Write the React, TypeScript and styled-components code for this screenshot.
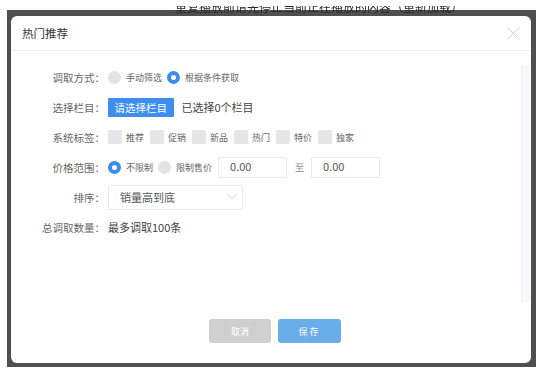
import React, { useState } from "react";
import styled, { createGlobalStyle } from "styled-components";

const GlobalStyle = createGlobalStyle`
  html, body {
    margin: 0;
    padding: 0;
    background: #ffffff;
  }
  body {
    font-family: "Noto Sans CJK SC", "Noto Sans", "Liberation Sans", sans-serif;
    overflow: hidden;
  }
  * {
    box-sizing: border-box;
  }
`;

const Backdrop = styled.div`
  position: relative;
  margin: 10px 0 0 7px;
  width: 529px;
  height: 357px;
  padding: 6px 5px 4px 4px;
  background: #4f4f4f;
`;

// page text behind the mask, only its lower half is in the window
const PageHint = styled.div`
  position: absolute;
  top: -4px;
  left: 168px;
  height: 7px;
  overflow: hidden;
`;

const HintText = styled.span`
  display: block;
  margin-top: -6px;
  font-size: 12px;
  line-height: 14px;
  color: #2a2a2a;
  white-space: nowrap;
  filter: blur(0.4px);
`;

const Modal = styled.div`
  display: flex;
  flex-direction: column;
  height: 100%;
  background: #ffffff;
  border-radius: 6px;
  overflow: hidden;
`;

const Header = styled.div`
  display: flex;
  align-items: center;
  justify-content: space-between;
  height: 35px;
  padding: 0 11px 0 11px;
  border-bottom: 1px solid #eeeeee;
`;

const Title = styled.h1`
  margin: 0;
  font-size: 11.5px;
  font-weight: 400;
  color: #333333;
`;

const CloseButton = styled.button`
  display: flex;
  padding: 0;
  border: none;
  background: none;
  cursor: pointer;
`;

const Body = styled.div`
  display: flex;
  padding-top: 11px;
  height: 251px;
`;

const Content = styled.div`
  flex: 1;
  display: flex;
  flex-direction: column;
`;

const ScrollTrack = styled.div`
  width: 10px;
  margin-top: 3px;
  background: #f8f8fa;
  border-left: 1px solid #efeff3;
`;

const Row = styled.div`
  display: flex;
  align-items: center;
  height: 30px;
`;

const Label = styled.div`
  width: 94px;
  margin-right: 3px;
  text-align: right;
  font-size: 10.5px;
  color: #666666;
  white-space: nowrap;
`;

const Options = styled.div<{ $gap: number }>`
  display: flex;
  align-items: center;
  gap: ${(p) => p.$gap}px;
`;

const Option = styled.label`
  display: flex;
  align-items: center;
  gap: 5px;
  font-size: 9px;
  color: #666666;
  cursor: pointer;
  white-space: nowrap;
`;

const RadioDot = styled.span<{ $checked: boolean }>`
  width: 13px;
  height: 13px;
  border-radius: 50%;
  background: ${(p) => (p.$checked ? "#ffffff" : "#e3e3e3")};
  border: ${(p) => (p.$checked ? "4px solid #3a8ee8" : "none")};
`;

const CheckBox = styled.span`
  width: 14px;
  height: 14px;
  border-radius: 2px;
  background: #e6e6e6;
  margin-right: -1px;
`;

const PrimaryButton = styled.button`
  height: 19px;
  padding: 0 6.5px;
  border: none;
  border-radius: 1px;
  background: #3e8ef0;
  color: #ffffff;
  font-family: inherit;
  font-size: 10.5px;
  line-height: 19px;
  cursor: pointer;
`;

const Note = styled.span`
  margin-left: 8px;
  font-size: 11px;
  color: #444444;
`;

const PriceInput = styled.input<{ $lead?: number }>`
  width: 69px;
  height: 21px;
  margin-left: ${(p) => p.$lead ?? 0}px;
  padding: 0 0 2px 11px;
  border: 1px solid #ebebeb;
  border-radius: 1px;
  font-family: inherit;
  font-size: 11px;
  color: #555555;
  outline: none;
`;

const To = styled.span`
  margin: 0 7px 0 8px;
  font-size: 9px;
  color: #888888;
`;

const Select = styled.div`
  display: flex;
  align-items: center;
  justify-content: space-between;
  width: 135px;
  height: 25px;
  padding: 0 3px 0 11px;
  border: 1px solid #ebebeb;
  border-radius: 2px;
  font-size: 11px;
  color: #555555;
`;

const Value = styled.span`
  font-size: 11px;
  color: #444444;
`;

const Footer = styled.div`
  flex: 1;
  display: flex;
  justify-content: center;
  align-items: flex-start;
  gap: 7px;
  padding: 17px 0 0 8px;
`;

const FooterButton = styled.button<{ $variant: "cancel" | "save" }>`
  width: ${(p) => (p.$variant === "cancel" ? 62 : 63)}px;
  height: 24px;
  border: none;
  border-radius: 3px;
  background: ${(p) => (p.$variant === "cancel" ? "#cfcfcf" : "#6aaee9")};
  color: #ffffff;
  font-family: inherit;
  font-size: 9px;
  letter-spacing: ${(p) => (p.$variant === "save" ? "2px" : "0")};
  cursor: pointer;
`;

const tags = ["推荐", "促销", "新品", "热门", "特价", "独家"];

const App = () => {
  const [mode, setMode] = useState<"manual" | "auto">("auto");
  const [price, setPrice] = useState<"all" | "limit">("all");
  const [minPrice, setMinPrice] = useState("0.00");
  const [maxPrice, setMaxPrice] = useState("0.00");

  return (
    <>
      <GlobalStyle />
      <Backdrop>
        <PageHint>
          <HintText>重复播放前请先停止当前正在播放的内容（重新加载）</HintText>
        </PageHint>
        <Modal>
          <Header>
            <Title>热门推荐</Title>
            <CloseButton>
              <svg width="13" height="13" viewBox="0 0 13 13">
                <path d="M0.5 0.5 L12.5 12.5 M12.5 0.5 L0.5 12.5" stroke="#d0d0d0" strokeWidth="1" fill="none" />
              </svg>
            </CloseButton>
          </Header>
          <Body>
            <Content>
              <Row>
                <Label>调取方式：</Label>
                <Options $gap={5}>
                  <Option onClick={() => setMode("manual")}>
                    <RadioDot $checked={mode === "manual"} />
                    手动筛选
                  </Option>
                  <Option onClick={() => setMode("auto")}>
                    <RadioDot $checked={mode === "auto"} />
                    根据条件获取
                  </Option>
                </Options>
              </Row>
              <Row>
                <Label>选择栏目：</Label>
                <PrimaryButton>请选择栏目</PrimaryButton>
                <Note>已选择0个栏目</Note>
              </Row>
              <Row>
                <Label>系统标签：</Label>
                <Options $gap={6}>
                  {tags.map((t) => (
                    <Option key={t}>
                      <CheckBox />
                      {t}
                    </Option>
                  ))}
                </Options>
              </Row>
              <Row>
                <Label>价格范围：</Label>
                <Options $gap={5}>
                  <Option onClick={() => setPrice("all")}>
                    <RadioDot $checked={price === "all"} />
                    不限制
                  </Option>
                  <Option onClick={() => setPrice("limit")}>
                    <RadioDot $checked={price === "limit"} />
                    限制售价
                  </Option>
                </Options>
                <PriceInput $lead={6} value={minPrice} onChange={(e) => setMinPrice(e.target.value)} />
                <To>至</To>
                <PriceInput value={maxPrice} onChange={(e) => setMaxPrice(e.target.value)} />
              </Row>
              <Row>
                <Label>排序：</Label>
                <Select>
                  销量高到底
                  <svg width="14" height="8" viewBox="0 0 14 8">
                    <path d="M2 1.5 L7 6 L12 1.5" stroke="#d6d6d6" strokeWidth="1" fill="none" />
                  </svg>
                </Select>
              </Row>
              <Row>
                <Label>总调取数量：</Label>
                <Value>最多调取100条</Value>
              </Row>
            </Content>
            <ScrollTrack />
          </Body>
          <Footer>
            <FooterButton $variant="cancel">取消</FooterButton>
            <FooterButton $variant="save">保存</FooterButton>
          </Footer>
        </Modal>
      </Backdrop>
    </>
  );
};

export default App;
